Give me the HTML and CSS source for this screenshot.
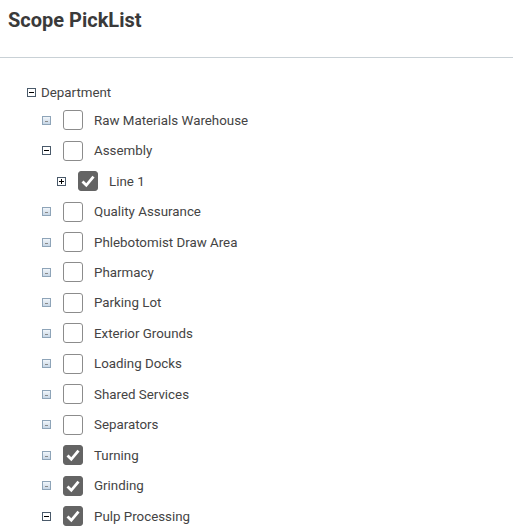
FILE: index.html
```html
<!DOCTYPE html>
<html lang="en">
<head>
    <meta charset="utf-8">
    <title>Scope PickList</title>
    <link rel="stylesheet" href="styles.css">
</head>
<body>

    <div class="header">
        <h1>Scope PickList</h1>
    </div>

    <div class="tree">
        <div class="root">
            <svg class="tog" width="9" height="9" viewBox="0 0 9 9"><rect x="0.5" y="0.5" width="8" height="8" fill="#fff" stroke="#4a5a6a"/><path d="M2 4.5h5" stroke="#000"/></svg>
            <span class="label">Department</span>
        </div>

        <div class="node">
            <svg class="tog" width="9" height="9" viewBox="0 0 9 9"><defs><linearGradient id="lg" x1="0" y1="0" x2="0" y2="1"><stop offset="0" stop-color="#f4f8fc"/><stop offset="1" stop-color="#c4d4e4"/></linearGradient></defs><rect x="0.5" y="0.5" width="8" height="8" fill="url(#lg)" stroke="#8ea4b8"/><path d="M3 5.5h3" stroke="#8a8a8a"/></svg>
            <span class="box"></span>
            <span class="label">Raw Materials Warehouse</span>
        </div>
        <div class="node">
            <svg class="tog" width="9" height="9" viewBox="0 0 9 9"><rect x="0.5" y="0.5" width="8" height="8" fill="#fff" stroke="#4a5a6a"/><path d="M2 4.5h5" stroke="#000"/></svg>
            <span class="box"></span>
            <span class="label">Assembly</span>
        </div>
        <div class="node sub">
            <svg class="tog" width="9" height="9" viewBox="0 0 9 9"><rect x="0.5" y="0.5" width="8" height="8" fill="#fff" stroke="#4a5a6a"/><path d="M2 4.5h5M4.5 2v5" stroke="#000"/></svg>
            <span class="box on"><svg width="20" height="20" viewBox="0 0 20 20"><path d="M4.5 10.5l3.8 3.8 7.2-8.6" fill="none" stroke="#fff" stroke-width="2.8"/></svg></span>
            <span class="label">Line 1</span>
        </div>
        <div class="node">
            <svg class="tog" width="9" height="9" viewBox="0 0 9 9"><rect x="0.5" y="0.5" width="8" height="8" fill="url(#lg)" stroke="#8ea4b8"/><path d="M3 5.5h3" stroke="#8a8a8a"/></svg>
            <span class="box"></span>
            <span class="label">Quality Assurance</span>
        </div>
        <div class="node">
            <svg class="tog" width="9" height="9" viewBox="0 0 9 9"><rect x="0.5" y="0.5" width="8" height="8" fill="url(#lg)" stroke="#8ea4b8"/><path d="M3 5.5h3" stroke="#8a8a8a"/></svg>
            <span class="box"></span>
            <span class="label">Phlebotomist Draw Area</span>
        </div>
        <div class="node">
            <svg class="tog" width="9" height="9" viewBox="0 0 9 9"><rect x="0.5" y="0.5" width="8" height="8" fill="url(#lg)" stroke="#8ea4b8"/><path d="M3 5.5h3" stroke="#8a8a8a"/></svg>
            <span class="box"></span>
            <span class="label">Pharmacy</span>
        </div>
        <div class="node">
            <svg class="tog" width="9" height="9" viewBox="0 0 9 9"><rect x="0.5" y="0.5" width="8" height="8" fill="url(#lg)" stroke="#8ea4b8"/><path d="M3 5.5h3" stroke="#8a8a8a"/></svg>
            <span class="box"></span>
            <span class="label">Parking Lot</span>
        </div>
        <div class="node">
            <svg class="tog" width="9" height="9" viewBox="0 0 9 9"><rect x="0.5" y="0.5" width="8" height="8" fill="url(#lg)" stroke="#8ea4b8"/><path d="M3 5.5h3" stroke="#8a8a8a"/></svg>
            <span class="box"></span>
            <span class="label">Exterior Grounds</span>
        </div>
        <div class="node">
            <svg class="tog" width="9" height="9" viewBox="0 0 9 9"><rect x="0.5" y="0.5" width="8" height="8" fill="url(#lg)" stroke="#8ea4b8"/><path d="M3 5.5h3" stroke="#8a8a8a"/></svg>
            <span class="box"></span>
            <span class="label">Loading Docks</span>
        </div>
        <div class="node">
            <svg class="tog" width="9" height="9" viewBox="0 0 9 9"><rect x="0.5" y="0.5" width="8" height="8" fill="url(#lg)" stroke="#8ea4b8"/><path d="M3 5.5h3" stroke="#8a8a8a"/></svg>
            <span class="box"></span>
            <span class="label">Shared Services</span>
        </div>
        <div class="node">
            <svg class="tog" width="9" height="9" viewBox="0 0 9 9"><rect x="0.5" y="0.5" width="8" height="8" fill="url(#lg)" stroke="#8ea4b8"/><path d="M3 5.5h3" stroke="#8a8a8a"/></svg>
            <span class="box"></span>
            <span class="label">Separators</span>
        </div>
        <div class="node">
            <svg class="tog" width="9" height="9" viewBox="0 0 9 9"><rect x="0.5" y="0.5" width="8" height="8" fill="url(#lg)" stroke="#8ea4b8"/><path d="M3 5.5h3" stroke="#8a8a8a"/></svg>
            <span class="box on"><svg width="20" height="20" viewBox="0 0 20 20"><path d="M4.5 10.5l3.8 3.8 7.2-8.6" fill="none" stroke="#fff" stroke-width="2.8"/></svg></span>
            <span class="label">Turning</span>
        </div>
        <div class="node">
            <svg class="tog" width="9" height="9" viewBox="0 0 9 9"><rect x="0.5" y="0.5" width="8" height="8" fill="url(#lg)" stroke="#8ea4b8"/><path d="M3 5.5h3" stroke="#8a8a8a"/></svg>
            <span class="box on"><svg width="20" height="20" viewBox="0 0 20 20"><path d="M4.5 10.5l3.8 3.8 7.2-8.6" fill="none" stroke="#fff" stroke-width="2.8"/></svg></span>
            <span class="label">Grinding</span>
        </div>
        <div class="node">
            <svg class="tog" width="9" height="9" viewBox="0 0 9 9"><rect x="0.5" y="0.5" width="8" height="8" fill="#fff" stroke="#4a5a6a"/><path d="M2 4.5h5" stroke="#000"/></svg>
            <span class="box on"><svg width="20" height="20" viewBox="0 0 20 20"><path d="M4.5 10.5l3.8 3.8 7.2-8.6" fill="none" stroke="#fff" stroke-width="2.8"/></svg></span>
            <span class="label">Pulp Processing</span>
        </div>
    </div>

</body>
</html>
```

FILE: styles.css
```css
* {
    margin: 0;
    padding: 0;
    box-sizing: border-box;
}

body {
    font-family: Roboto, "Liberation Sans", sans-serif;
    color: #444;
    background: #fff;
}

.header {
    height: 58px;
    padding: 8px 8px 0;
    border-bottom: 1px solid #c9d1d6;
}

.header h1 {
    font-size: 20px;
    font-weight: 700;
    color: #3a3a3a;
    line-height: 25px;
}

.tree {
    padding-top: 22px;
    font-size: 13.33px;
}

.root {
    display: flex;
    align-items: center;
    height: 25px;
    padding-left: 27px;
}

.root .tog {
    margin-right: 5px;
}

.node {
    display: flex;
    align-items: center;
    height: 30.46px;
    padding-left: 42px;
}

.node.sub {
    padding-left: 57px;
}

.tog {
    flex: none;
    display: block;
}

.box {
    flex: none;
    width: 20px;
    height: 20px;
    margin-left: 12px;
    margin-right: 11px;
    border: 1px solid #8c8c8c;
    border-radius: 3px;
    background: #fff;
}

.box.on {
    background: #646464;
    border-color: #646464;
}

.box.on svg {
    display: block;
    margin: -1px;
}

.label {
    white-space: nowrap;
}
```
